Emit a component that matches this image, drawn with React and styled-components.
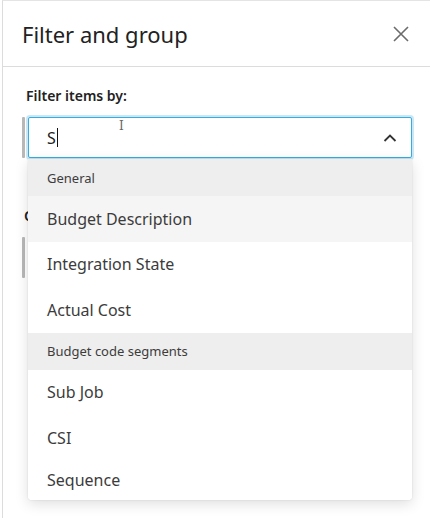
import styled, { createGlobalStyle } from "styled-components";

const GlobalStyle = createGlobalStyle`
  body {
    margin: 0;
    background: #fff;
    font-family: "Noto Sans", "Open Sans", sans-serif;
    color: #3c3c3c;
  }
`;

const Panel = styled.div`
  margin-left: 2px;
  height: 518px;
  border-left: 1px solid #dcdcdc;
  border-top: 1px solid #e4e4e4;
  box-sizing: border-box;
  overflow: hidden;
`;

const Header = styled.div`
  height: 65px;
  padding: 0 18px 0 19px;
  display: flex;
  align-items: center;
  justify-content: space-between;
  border-bottom: 1px solid #dcdcdc;
`;

const Title = styled.h1`
  margin: 0;
  font-size: 22px;
  font-weight: 400;
  color: #222;
`;

const CloseBtn = styled.button`
  border: 0;
  background: none;
  padding: 0;
  width: 22px;
  height: 22px;
  display: flex;
  align-items: center;
  justify-content: center;
  cursor: pointer;
`;

const Body = styled.div`
  padding: 19px 18px 0 19px;
`;

const Label = styled.div`
  font-size: 14px;
  font-weight: 600;
  color: #222;
  margin: ${(p) => p.$margin || "0 0 12px 4px"};
`;

const FieldRow = styled.div`
  position: relative;
  display: flex;
  gap: 3px;
  height: 41px;
`;

const Accent = styled.div`
  width: 3px;
  background: #b8b8b8;
  border-radius: 1px;
`;

const Input = styled.div`
  flex: 1;
  display: flex;
  align-items: center;
  justify-content: space-between;
  padding: 0 14px 0 18px;
  border: 1px solid ${(p) => (p.$active ? "#38abdf" : "#cfcfcf")};
  border-radius: 2px;
  box-shadow: ${(p) =>
    p.$active ? "0 0 0 2px rgba(56, 171, 223, 0.28)" : "none"};
  background: #fff;
  font-size: 16px;
  color: #222;
`;

const Caret = styled.span`
  display: inline-block;
  width: 1px;
  height: 19px;
  background: #111;
  margin-left: 1px;
  vertical-align: middle;
`;

const TypedText = styled.span`
  display: flex;
  align-items: center;
`;

const IBeam = styled.span`
  position: absolute;
  left: 97px;
  top: 2px;
  font-family: "DejaVu Serif", serif;
  font-size: 12px;
  color: #666;
`;

const Dropdown = styled.ul`
  position: absolute;
  top: 42px;
  left: 6px;
  right: 0;
  margin: 0;
  padding: 0;
  list-style: none;
  background: #fff;
  border-radius: 0 0 4px 4px;
  box-shadow: 0 4px 14px rgba(0, 0, 0, 0.13), 0 0 2px rgba(0, 0, 0, 0.12);
  overflow: hidden;
  z-index: 2;
`;

const GroupHeader = styled.li`
  height: 37px;
  display: flex;
  align-items: center;
  padding-left: 19px;
  background: #eeeeee;
  font-size: 13px;
  color: #3c3c3c;
`;

const Option = styled.li`
  height: ${(p) => (p.$last ? "39px" : "45.5px")};
  display: flex;
  align-items: center;
  padding-left: 19px;
  font-size: 16px;
  color: #3c3c3c;
  background: ${(p) => (p.$hover ? "#f5f5f5" : "#fff")};
`;

const SecondField = styled.div`
  margin-top: 48px;
`;

const groups = [
  {
    name: "General",
    items: ["Budget Description", "Integration State", "Actual Cost"],
  },
  {
    name: "Budget code segments",
    items: ["Sub Job", "CSI", "Sequence"],
  },
];

const App = () => {
  return (
    <>
      <GlobalStyle />
      <Panel>
        <Header>
          <Title>Filter and group</Title>
          <CloseBtn aria-label="Close">
            <svg width="18" height="18" viewBox="0 0 18 18">
              <path
                d="M2 2 L16 16 M16 2 L2 16"
                stroke="#6b6b6b"
                strokeWidth="1.6"
                fill="none"
              />
            </svg>
          </CloseBtn>
        </Header>
        <Body>
          <Label>Filter items by:</Label>
          <FieldRow>
            <Accent />
            <Input $active>
              <TypedText>
                S<Caret />
              </TypedText>
              <svg width="14" height="10" viewBox="0 0 14 10">
                <path
                  d="M1.5 8 L7 2.5 L12.5 8"
                  stroke="#333"
                  strokeWidth="1.8"
                  fill="none"
                />
              </svg>
            </Input>
            <IBeam>I</IBeam>
            <Dropdown>
              {groups.map((group, g) => (
                <div key={group.name}>
                  <GroupHeader>{group.name}</GroupHeader>
                  {group.items.map((item, index) => (
                    <Option
                      key={item}
                      $hover={g === 0 && index === 0}
                      $last={g === groups.length - 1 && index === group.items.length - 1}
                    >
                      {item}
                    </Option>
                  ))}
                </div>
              ))}
            </Dropdown>
          </FieldRow>
          <SecondField>
            <Label $margin="0 0 12px 2px">Group items by:</Label>
            <FieldRow>
              <Accent />
              <Input />
            </FieldRow>
          </SecondField>
        </Body>
      </Panel>
    </>
  );
};

export default App;
